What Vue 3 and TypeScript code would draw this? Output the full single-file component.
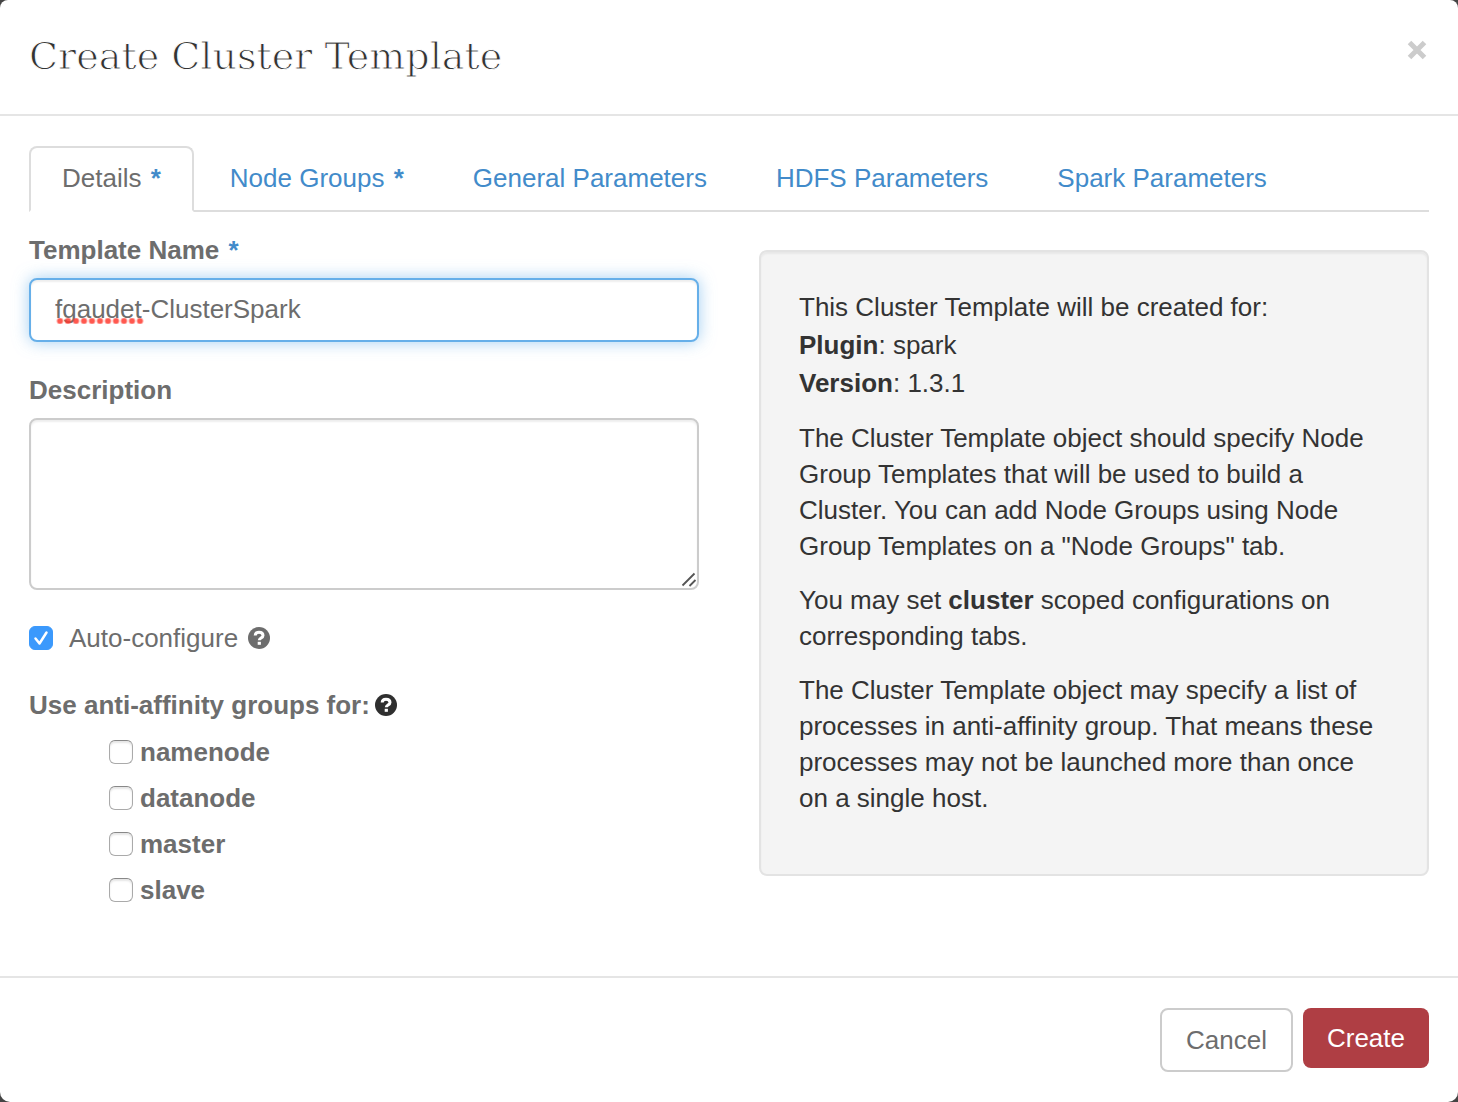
<script setup lang="ts">
import { ref } from 'vue'

interface Tab {
  id: string
  label: string
  required: boolean
}

const tabs: Tab[] = [
  { id: 'details', label: 'Details', required: true },
  { id: 'node-groups', label: 'Node Groups', required: true },
  { id: 'general', label: 'General Parameters', required: false },
  { id: 'hdfs', label: 'HDFS Parameters', required: false },
  { id: 'spark', label: 'Spark Parameters', required: false },
]

const activeTab = ref('details')
const templateName = ref('fgaudet-ClusterSpark')
const description = ref('')
const autoConfigure = ref(true)
const processes = ['namenode', 'datanode', 'master', 'slave']
const antiAffinity = ref<string[]>([])
</script>

<template>
  <form class="modal" @submit.prevent>
    <header class="modal-header">
      <h1 class="title">Create Cluster Template</h1>
      <button type="button" class="close" aria-label="Close">
        <svg width="20" height="20" viewBox="0 0 20 20" aria-hidden="true">
          <path d="M2.500 2.500 17.500 17.500M17.500 2.500 2.500 17.500" stroke="#ccc" stroke-width="5" />
        </svg>
      </button>
    </header>

    <div class="modal-body">
      <nav class="tabs">
        <a
          v-for="tab in tabs"
          :key="tab.id"
          :href="'#' + tab.id"
          class="tab"
          :class="{ active: tab.id === activeTab }"
          @click.prevent="activeTab = tab.id"
        >{{ tab.label }}<span v-if="tab.required" class="required"> *</span></a>
      </nav>

      <div class="columns">
        <div class="fields">
          <div class="field">
            <label class="label" for="name">Template Name<span class="required"> *</span></label>
            <div class="input-wrap">
              <input id="name" v-model="templateName" class="control" type="text" spellcheck="false" />
              <span class="misspelled" aria-hidden="true"></span>
            </div>
          </div>

          <div class="field">
            <label class="label" for="description">Description</label>
            <div class="input-wrap">
              <textarea id="description" v-model="description" class="control area"></textarea>
              <svg class="grip" width="16" height="16" viewBox="0 0 16 16" aria-hidden="true">
                <path d="M1.500 13.500 13.500 1.500M8.500 14 14.500 8" stroke="#555" stroke-width="1.800" />
              </svg>
            </div>
          </div>

          <div class="auto">
            <input id="auto" v-model="autoConfigure" class="check" type="checkbox" />
            <label for="auto">Auto-configure</label>
            <svg class="help" width="22" height="22" viewBox="0 0 22 22" aria-hidden="true">
              <circle cx="11" cy="11" r="11" fill="#6d6d6d" />
              <path d="M7.200 8.600C7.200 6.200 8.800 5.200 11 5.200s4 1.100 4 3.300c0 2.500-3.700 2.600-3.700 4.800" fill="none" stroke="#fff" stroke-width="3" />
              <rect x="9.700" y="14.800" width="3.200" height="3" fill="#fff" />
            </svg>
          </div>

          <fieldset class="affinity">
            <legend class="legend">
              Use anti-affinity groups for:
              <svg class="help" width="22" height="22" viewBox="0 0 22 22" aria-hidden="true">
                <circle cx="11" cy="11" r="11" fill="#2f2f2f" />
                <path d="M7.200 8.600C7.200 6.200 8.800 5.200 11 5.200s4 1.100 4 3.300c0 2.500-3.700 2.600-3.700 4.800" fill="none" stroke="#fff" stroke-width="3" />
                <rect x="9.700" y="14.800" width="3.200" height="3" fill="#fff" />
              </svg>
            </legend>
            <div v-for="name in processes" :key="name" class="process">
              <input :id="name" v-model="antiAffinity" class="check" type="checkbox" :value="name" />
              <label :for="name">{{ name }}</label>
            </div>
          </fieldset>
        </div>

        <aside class="well">
          <div class="summary">
            <div>This Cluster Template will be created for:</div>
            <div><b>Plugin</b>: spark</div>
            <div><b>Version</b>: 1.3.1</div>
          </div>
          <p>
            The Cluster Template object should specify Node Group Templates that will be used to
            build a Cluster. You can add Node Groups using Node Group Templates on a "Node Groups"
            tab.
          </p>
          <p>You may set <b>cluster</b> scoped configurations on corresponding tabs.</p>
          <p>
            The Cluster Template object may specify a list of processes in anti-affinity group. That
            means these processes may not be launched more than once on a single host.
          </p>
        </aside>
      </div>
    </div>

    <footer class="modal-footer">
      <button type="button" class="btn cancel">Cancel</button>
      <button type="submit" class="btn create">Create</button>
    </footer>
  </form>
</template>

<style>
body {
  margin: 0;
  background: #444;
}
</style>

<style scoped>
.modal,
.modal * {
  box-sizing: border-box;
}

.modal {
  background: #fff;
  border-radius: 8px 8px 10px 10px;
  color: #6d6d6d;
  font: 26px/36px "Liberation Sans", Arial, sans-serif;
}

.modal-header {
  display: flex;
  justify-content: space-between;
  align-items: flex-start;
  padding: 30px 29px 32px;
  border-bottom: 2px solid #e5e5e5;
}

.title {
  margin: 0;
  color: #333;
  font: 400 38px/52px "DejaVu Serif", serif;
  -webkit-text-stroke: 1px #fff;
}

.close {
  display: flex;
  margin: 10px 2px 0 0;
  padding: 0;
  border: 0;
  background: none;
}

.modal-body {
  padding: 30px 29px 63px;
}

.tabs {
  display: flex;
  gap: 3px;
  border-bottom: 2px solid #ddd;
}

.tab {
  margin-bottom: -2px;
  padding: 12px 31px 14px;
  border: 2px solid transparent;
  border-radius: 8px 8px 0 0;
  color: #428bca;
  text-decoration: none;
  white-space: pre;
}

.tab.active {
  border-color: #ddd #ddd #fff;
  background: #fff;
  color: #6d6d6d;
}

.required {
  margin-left: 2px;
  color: #428bca;
  font-weight: 700;
}

.columns {
  display: grid;
  grid-template-columns: 1fr 1fr;
  gap: 60px;
  align-items: start;
}

.fields {
  padding-top: 20px;
}

.field {
  margin-bottom: 30px;
}

.label {
  display: block;
  margin-bottom: 10px;
  font-weight: 700;
  white-space: pre;
}

.input-wrap {
  position: relative;
}

.control {
  display: block;
  width: 100%;
  height: 64px;
  padding: 10px 24px 12px;
  border: 2px solid #66afe9;
  border-radius: 8px;
  outline: 0;
  background: #fff;
  box-shadow: inset 0 2px 2px rgba(0, 0, 0, 0.07), 0 0 16px rgba(102, 175, 233, 0.6);
  color: #6d6d6d;
  font: inherit;
}

.area {
  height: 172px;
  border-color: #ccc;
  box-shadow: inset 0 2px 2px rgba(0, 0, 0, 0.07);
  resize: none;
}

.misspelled {
  position: absolute;
  bottom: 18px;
  left: 27px;
  width: 88px;
  height: 6px;
  background: radial-gradient(circle at 4px 3px, rgba(255, 59, 48, 0.85) 2px, transparent 4px) 0 0 / 8px 6px;
}

.grip {
  position: absolute;
  right: 2px;
  bottom: 2px;
}

.check {
  flex: none;
  width: 24px;
  height: 24px;
  margin: 0;
  border: 1px solid #aaa;
  border-top-color: #888;
  border-radius: 6px;
  appearance: none;
  background: #fff;
  box-shadow: inset 0 2px 2px rgba(0, 0, 0, 0.1);
}

.check:checked {
  border-color: #3b99fc;
  background: #3b99fc url("data:image/svg+xml,%3Csvg xmlns='http://www.w3.org/2000/svg' viewBox='0 0 22 22'%3E%3Cpath d='M5.500 11.500l4 5 7-11' fill='none' stroke='white' stroke-width='2.500' stroke-linecap='round' stroke-linejoin='round'/%3E%3C/svg%3E") center / 22px 22px no-repeat;
  box-shadow: none;
}

.auto {
  display: flex;
  align-items: center;
}

.auto label {
  margin: 0 10px 0 16px;
}

.affinity {
  margin: 31px 0 0;
  padding: 0;
  border: 0;
}

.legend {
  display: flex;
  align-items: center;
  gap: 5px;
  margin-bottom: 6px;
  padding: 0;
  font-weight: 700;
}

.process {
  display: flex;
  align-items: center;
  gap: 7px;
  height: 46px;
  margin-left: 80px;
  font-weight: 700;
}

.well {
  margin-top: 38px;
  padding: 36px 38px 58px;
  border: 2px solid #e3e3e3;
  border-radius: 8px;
  background: #f4f4f4;
  box-shadow: inset 0 2px 2px rgba(0, 0, 0, 0.05);
  color: #333;
}

.summary {
  line-height: 38px;
}

.well p {
  margin: 18px 0 0;
}

.modal-footer {
  display: flex;
  justify-content: flex-end;
  align-items: flex-start;
  gap: 10px;
  padding: 30px 29px;
  border-top: 2px solid #e5e5e5;
}

.btn {
  padding: 12px 24px;
  border: 0;
  border-radius: 8px;
  font: inherit;
}

.cancel {
  border: 2px solid #ccc;
  background: #fff;
  color: #6d6d6d;
}

.create {
  background: #af3e44;
  color: #fff;
}
</style>
